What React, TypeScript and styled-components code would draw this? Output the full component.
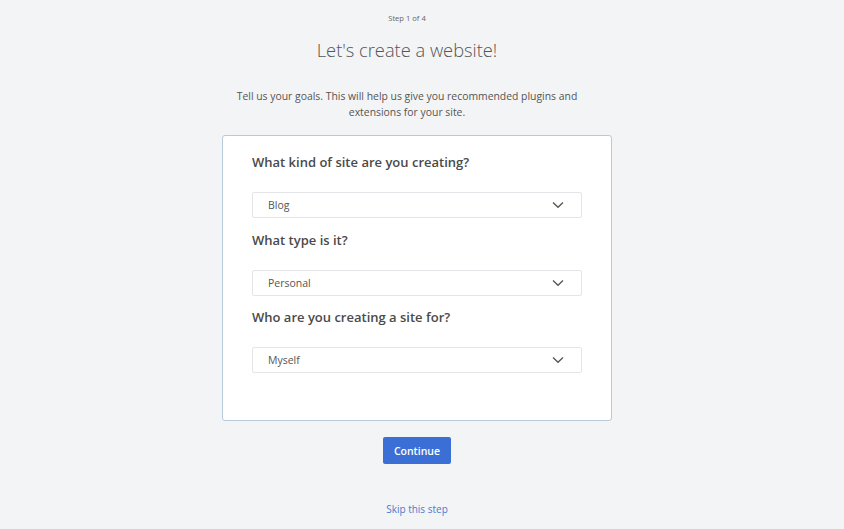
import React from "react";
import styled, { createGlobalStyle } from "styled-components";

const Global = createGlobalStyle`
  html, body { margin: 0; padding: 0; background: #f3f4f6; }
  body { font-family: "Open Sans", "Noto Sans", sans-serif; color: #555; }
`;

const Page = styled.div`
  display: flex;
  flex-direction: column;
  align-items: center;
  padding: 12px 10px 0 0;
  min-height: 529px;
  box-sizing: border-box;
`;

const Header = styled.header`
  display: flex;
  flex-direction: column;
  align-items: center;
  padding-right: 20px;
`;

const Step = styled.div`
  font-size: 7.6px;
  line-height: 12px;
  color: #666;
`;

const Title = styled.h1`
  margin: 11px 0 0;
  font-size: 18.3px;
  font-weight: 300;
  line-height: 30px;
  color: #555;
`;

const Desc = styled.p`
  margin: 23px 0 0;
  width: 380px;
  text-align: center;
  font-size: 10.4px;
  line-height: 16px;
  color: #555;
`;

const Card = styled.div`
  margin-top: 15px;
  width: 390px;
  height: 286px;
  box-sizing: border-box;
  background: #fff;
  border: 1px solid #b8c9da;
  border-radius: 3px;
  padding: 16px 29px 0;
  display: flex;
  flex-direction: column;
`;

const Question = styled.div<{ $first?: boolean }>`
  margin-top: ${(p) => (p.$first ? 0 : 11.5)}px;
  font-size: 13px;
  font-weight: 600;
  line-height: 20px;
  color: #4a4a4a;
`;

const Select = styled.div`
  margin-top: 20px;
  height: 26px;
  box-sizing: border-box;
  border: 1px solid #e3e5e8;
  border-radius: 2px;
  display: flex;
  align-items: center;
  justify-content: space-between;
  padding: 0 17px 0 15px;
  font-size: 10.5px;
  color: #555;
`;

const Chevron = styled.svg`
  width: 12px;
  height: 8px;
`;

const Button = styled.button`
  margin-top: 16px;
  width: 68px;
  height: 27px;
  border: none;
  border-radius: 2px;
  background: #3c6fd5;
  color: #fff;
  font-family: "Open Sans", "Noto Sans", sans-serif;
  font-size: 10.5px;
  font-weight: 600;
  padding: 0;
`;

const Skip = styled.a`
  margin-top: 38px;
  font-size: 10px;
  color: #4a7bcf;
  text-decoration: none;
`;

const fields = [
  { q: "What kind of site are you creating?", v: "Blog" },
  { q: "What type is it?", v: "Personal" },
  { q: "Who are you creating a site for?", v: "Myself" },
];

export default function App() {
  return (
    <>
      <Global />
      <Page>
        <Header>
          <Step>Step 1 of 4</Step>
          <Title>Let's create a website!</Title>
          <Desc>
            Tell us your goals. This will help us give you recommended plugins and
            extensions for your site.
          </Desc>
        </Header>
        <Card>
          {fields.map((f, i) => (
            <React.Fragment key={f.q}>
              <Question $first={i === 0}>{f.q}</Question>
              <Select>
                <span>{f.v}</span>
                <Chevron viewBox="0 0 12 8">
                  <path d="M1 1.5 L6 6.3 L11 1.5" fill="none" stroke="#555" strokeWidth="1.3" />
                </Chevron>
              </Select>
            </React.Fragment>
          ))}
        </Card>
        <Button>Continue</Button>
        <Skip href="#">Skip this step</Skip>
      </Page>
    </>
  );
}
